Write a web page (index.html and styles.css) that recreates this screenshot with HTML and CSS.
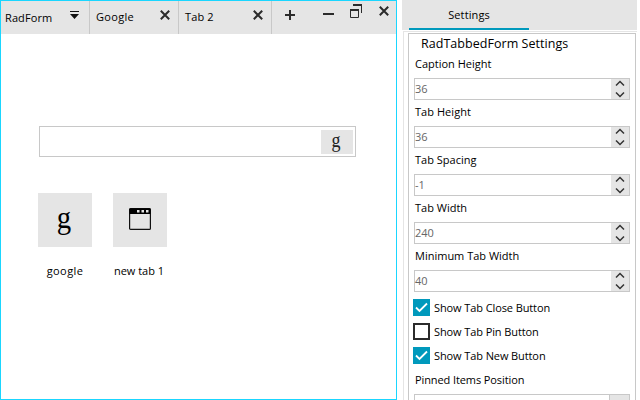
FILE: index.html
```html
<!DOCTYPE html>
<html lang="en">
<head>
<meta charset="utf-8">
<title>RadTabbedForm</title>
<link rel="stylesheet" href="styles.css">
</head>
<body>
<div class="app">
  <main class="window">
    <header class="caption">
      <div class="tab tab-form"><span class="t-form">RadForm</span>
        <svg class="drop" width="9" height="9" viewBox="0 0 9 9"><path d="M0 0h9v1H0zM0 3h9L4.500 8z" fill="#111"/></svg>
      </div>
      <div class="tab tab-google"><span class="t-google">Google</span>
        <svg class="close" width="10" height="10" viewBox="0 0 10 10"><path d="M.8.8l8.400 8.400M9.200.8L.8 9.200"/></svg>
      </div>
      <div class="tab tab-two"><span class="t-two">Tab 2</span>
        <svg class="close" width="10" height="10" viewBox="0 0 10 10"><path d="M.8.8l8.400 8.400M9.200.8L.8 9.200"/></svg>
      </div>
      <svg class="plus" width="10" height="10" viewBox="0 0 10 10"><path d="M0 5h10M5 0v10"/></svg>
      <div class="controls">
        <svg width="11" height="12" viewBox="0 0 11 12"><path d="M0 8h11" stroke-width="2"/></svg>
        <svg class="restore" width="12" height="14" viewBox="0 0 12 14"><path d="M3 1h9M0 6h9" stroke-width="2"/><path d="M11.500 1v8M.5 6v7.500h8V6" stroke-width="1"/></svg>
        <svg width="10" height="10" viewBox="0 0 10 10"><path d="M.8.8l8.400 8.400M9.200.8L.8 9.200" stroke-width="2"/></svg>
      </div>
    </header>
    <section class="page">
      <div class="search"><button class="go"><span class="g g-small">g</span></button></div>
      <div class="tiles">
        <div class="tile"><div class="square"><span class="g">g</span></div><span class="t-tile">google</span></div>
        <div class="tile"><div class="square">
          <svg class="browser" width="22" height="22" viewBox="0 0 22 22"><rect x=".6" y=".6" width="20.800" height="20.800" rx="1" fill="none" stroke="#111" stroke-width="1.200"/><path d="M.5.500h21v5.500H.5z" fill="#000"/><path d="M8 2h2.500v2.500H8zM12.500 2H15v2.500h-2.500zM17 2h2.500v2.500H17z" fill="#e5e5e5"/></svg>
        </div><span class="t-new">new tab 1</span></div>
      </div>
    </section>
  </main>
  <aside class="side">
    <nav class="strip"><div class="strip-tab"><span>Settings</span></div></nav>
    <div class="frame">
      <div class="panel">
        <h1><span>RadTabbedForm Settings</span></h1>
        <label><span class="l1">Caption Height</span></label>
        <div class="spin"><span>36</span><i><svg width="10" height="18" viewBox="0 0 10 18"><path d="M1 5.500l4-4 4 4M1 12.500l4 4 4-4"/></svg></i></div>
        <label><span class="l2">Tab Height</span></label>
        <div class="spin"><span>36</span><i><svg width="10" height="18" viewBox="0 0 10 18"><path d="M1 5.500l4-4 4 4M1 12.500l4 4 4-4"/></svg></i></div>
        <label><span class="l3">Tab Spacing</span></label>
        <div class="spin"><span>-1</span><i><svg width="10" height="18" viewBox="0 0 10 18"><path d="M1 5.500l4-4 4 4M1 12.500l4 4 4-4"/></svg></i></div>
        <label><span class="l4">Tab Width</span></label>
        <div class="spin"><span>240</span><i><svg width="10" height="18" viewBox="0 0 10 18"><path d="M1 5.500l4-4 4 4M1 12.500l4 4 4-4"/></svg></i></div>
        <label><span class="l5">Minimum Tab Width</span></label>
        <div class="spin"><span>40</span><i><svg width="10" height="18" viewBox="0 0 10 18"><path d="M1 5.500l4-4 4 4M1 12.500l4 4 4-4"/></svg></i></div>
        <div class="checks">
          <div class="check"><b class="on"><svg width="17" height="17" viewBox="0 0 17 17"><path d="M3 8.500l3.500 3.500 7.500-7.500"/></svg></b><span class="c1">Show Tab Close Button</span></div>
          <div class="check"><b></b><span class="c2">Show Tab Pin Button</span></div>
          <div class="check"><b class="on"><svg width="17" height="17" viewBox="0 0 17 17"><path d="M3 8.500l3.500 3.500 7.500-7.500"/></svg></b><span class="c3">Show Tab New Button</span></div>
        </div>
        <label class="last"><span class="l6">Pinned Items Position</span></label>
        <div class="spin select"><i></i></div>
      </div>
    </div>
  </aside>
</div>
</body>
</html>
```
FILE: styles.css
```css
* { box-sizing: border-box; }
body { margin: 0; background: #fff; overflow: hidden; font-family: "Open Sans", "Noto Sans", sans-serif; font-size: 11px; color: #000; }
svg { display: block; flex: none; }
.app { display: flex; width: 640px; height: 400px; overflow: hidden; }
.window { width: 397px; height: 400px; border: 1px solid #1ad6ff; flex: none; }
.caption { display: flex; height: 33px; background: #e5e5e5; }
.tab { display: flex; justify-content: space-between; height: 33px; border-right: 1px solid #c8c8c8; line-height: 32px; white-space: nowrap; }
.tab-form { width: 89px; padding: 0 10px 0 4px; line-height: 33px; }
.tab-google { width: 89px; padding: 0 8px 0 6px; }
.tab-two { width: 93px; padding: 0 8px 0 6px; }
.t-form { letter-spacing: .1px; }
.t-google { letter-spacing: .3px; }
.t-two { letter-spacing: .15px; }
.t-tile { letter-spacing: .4px; }
.t-new { margin-left: -2px; }
.drop { margin-top: 10px; }
.close { margin-top: 9px; fill: none; stroke: #2b2b2b; stroke-width: 2; }
.plus { margin: 9px 0 0 13px; stroke: #2b2b2b; stroke-width: 2; }
.controls { display: flex; margin-left: 28px; fill: none; stroke: #2b2b2b; }
.controls svg { margin-top: 5px; }
.controls .restore { margin: 3px 17px 0 16px; }
.page { padding: 92px 0 0 37px; }
.search { display: flex; justify-content: flex-end; width: 317px; height: 31px; margin-left: 1px; padding: 3px 2px; border: 1px solid #c8c8c8; }
.go { width: 32px; height: 24px; padding: 0; border: 0; background: #e5e5e5; display: flex; align-items: center; justify-content: center; color: #222; }
.g { font-family: "Liberation Serif", serif; font-size: 32px; line-height: 30px; padding-bottom: 7px; transform: scaleX(.9); margin-left: -3px; }
.g-small { font-size: 20px; line-height: 20px; padding-bottom: 4px; }
.tiles { display: flex; gap: 21px; margin-top: 36px; }
.tile { width: 54px; text-align: center; white-space: nowrap; line-height: 16px; }
.square { width: 54px; height: 54px; margin-bottom: 16px; background: #e5e5e5; display: flex; align-items: center; justify-content: center; }
.browser { margin-bottom: 2px; }
.side { width: 235px; margin-left: 5px; flex: none; }
.strip { height: 30px; padding-left: 7px; background: #e5e5e5; }
.strip-tab { width: 120px; height: 30px; border-bottom: 2px solid #0099bc; text-align: center; line-height: 29px; letter-spacing: .1px; }
.frame { height: 369px; margin: 1px 0 0 1px; border: solid #e5e5e5; border-width: 1px 0 0 1px; padding: 1px 0 0 4px; overflow: hidden; }
.panel { width: 228px; height: 380px; border: 1px solid #c8c8c8; padding-left: 5px; }
h1 { margin: 0; padding-left: 7px; font-weight: 400; font-size: 12.500px; letter-spacing: .04px; line-height: 19px; height: 20px; white-space: nowrap; }
label { display: block; height: 26px; padding: 4px 0 0 1px; line-height: 16px; white-space: nowrap; }
h1 + label { height: 24px; padding-top: 2px; }
.l2 { letter-spacing: .05px; }
.l6 { letter-spacing: -.1px; }
.spin { display: flex; justify-content: space-between; width: 216px; height: 22px; border: 1px solid #c8c8c8; line-height: 20px; color: #666; }
.spin i { width: 18px; background: #e5e5e5; display: flex; align-items: center; justify-content: center; }
.spin svg { fill: none; stroke: #333; stroke-width: 1.5; }
.checks { margin: 7px 0 0 -1px; }
.check { display: flex; align-items: center; gap: 4px; height: 17px; margin-bottom: 7px; white-space: nowrap; letter-spacing: -.1px; }
.check b { width: 17px; height: 17px; border: 2px solid #2b2b2b; flex: none; }
.check .on { border: 0; background: #0099bc; }
.check svg { fill: none; stroke: #fff; stroke-width: 1.8; }
label.last { height: 23px; padding-top: 1px; }
.select { justify-content: flex-end; }
.select i { width: 20px; border-left: 1px solid #c8c8c8; }
```
